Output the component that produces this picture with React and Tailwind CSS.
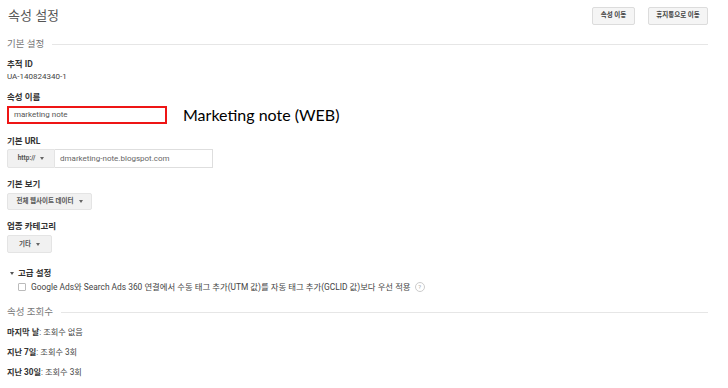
const FONT = "font-['Roboto','Noto_Sans_CJK_KR',sans-serif]";

function Caret() {
  return <span className="ml-[5px] inline-block w-0 h-0 border-l-[2.5px] border-r-[2.5px] border-t-[3px] border-l-transparent border-r-transparent border-t-[#666]" />;
}

function SectionHead({ title }) {
  return (
    <div className="flex items-center h-[26px]">
      <span className="text-[9.5px] text-[#777] leading-none whitespace-nowrap">{title}</span>
      <div className="flex-1 h-px bg-[#e6e6e6] ml-[8px] mr-[20px]" />
    </div>
  );
}

function Label({ children, className = "" }) {
  return <div className={`h-[14px] flex items-center text-[8.5px] font-bold text-[#333] leading-none ${className}`}>{children}</div>;
}

export default function App() {
  return (
    <div className={`w-[728px] h-[388px] bg-white overflow-hidden pl-[7px] ${FONT}`}>
      <div className="flex items-center justify-between h-[31px] pr-[20px]">
        <h1 className="text-[13px] text-[#555] leading-none pl-[1px]">속성 설정</h1>
        <div className="flex gap-[13px]">
          <button className="h-[18px] w-[43px] bg-[#f5f5f5] border border-[#dcdcdc] rounded-[2px] text-[6.5px] text-[#444] font-bold leading-none">속성 이동</button>
          <button className="h-[18px] w-[60px] bg-[#f5f5f5] border border-[#dcdcdc] rounded-[2px] text-[6.5px] text-[#444] font-bold leading-none">휴지통으로 이동</button>
        </div>
      </div>

      <SectionHead title="기본 설정" />

      <Label>추적 ID</Label>
      <div className="h-[12px] flex items-center text-[8px] text-[#444] leading-none">UA-140824340-1</div>

      <Label className="mt-[7px]">속성 이름</Label>
      <div className="mt-[2px] flex items-center h-[18px]">
        <div className="w-[160px] h-[18px] border-2 border-[#ee1515] flex items-center pl-[5px] text-[8px] text-[#555] leading-none">marketing note</div>
        <span className="ml-[16px] text-[16px] text-black leading-none font-['Lato',sans-serif]">Marketing note (WEB)</span>
      </div>

      <Label className="mt-[10px]">기본 URL</Label>
      <div className="mt-[1px] flex h-[19px] w-[206px]">
        <div className="w-[48px] bg-[#f1f1f1] border border-[#e4e4e4] rounded-l-[2px] flex items-center justify-center text-[6.5px] font-bold text-[#555] leading-none">
          http:// <Caret />
        </div>
        <div className="flex-1 bg-white border border-[#dedede] border-l-0 flex items-center pl-[5px] text-[8px] text-[#666] leading-none">dmarketing-note.blogspot.com</div>
      </div>

      <Label className="mt-[9px]">기본 보기</Label>
      <div className="mt-[2px] h-[17px] w-[85px] bg-[#f1f1f1] border border-[#e4e4e4] rounded-[2px] flex items-center justify-center text-[6.5px] font-bold text-[#555] leading-none">
        전체 웹사이트 데이터 <Caret />
      </div>

      <Label className="mt-[9px]">업종 카테고리</Label>
      <div className="mt-[2px] h-[18px] w-[45px] bg-[#f1f1f1] border border-[#e4e4e4] rounded-[2px] flex items-center justify-center text-[6.5px] font-bold text-[#555] leading-none">
        기타 <Caret />
      </div>

      <div className="mt-[13px] h-[14px] flex items-center pl-[3px] text-[8.5px] font-bold text-[#333] leading-none">
        <span className="mr-[4px] inline-block w-0 h-0 border-l-[2.5px] border-r-[2.5px] border-t-[3px] border-l-transparent border-r-transparent border-t-[#555]" />
        고급 설정
      </div>
      <div className="h-[14px] flex items-center pl-[11px] text-[8.4px] text-[#444] leading-none whitespace-nowrap">
        <span className="w-[8px] h-[8px] border border-[#bbb] rounded-[1px] bg-white mr-[5px]" />
        Google Ads와 Search Ads 360 연결에서 수동 태그 추가(UTM 값)를 자동 태그 추가(GCLID 값)보다 우선 적용
        <span className="ml-[4px] w-[10px] h-[10px] rounded-full border border-[#ccc] text-[6px] text-[#aaa] flex items-center justify-center leading-none">?</span>
      </div>

      <div className="mt-[5px]">
        <SectionHead title="속성 조회수" />
      </div>

      <div className="h-[14px] flex items-center text-[8.2px] text-[#444] leading-none">
        <b className="text-[#333]">마지막 날</b>: 조회수 없음
      </div>
      <div className="mt-[6px] h-[14px] flex items-center text-[8.2px] text-[#444] leading-none">
        <b className="text-[#333]">지난 7일</b>: 조회수 3회
      </div>
      <div className="mt-[6px] h-[14px] flex items-center text-[8.2px] text-[#444] leading-none">
        <b className="text-[#333]">지난 30일</b>: 조회수 3회
      </div>
    </div>
  );
}
